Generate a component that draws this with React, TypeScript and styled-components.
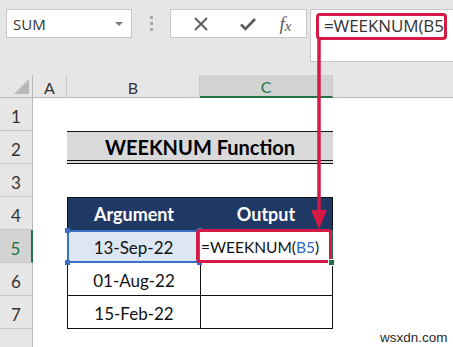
import React from 'react';
import styled, { createGlobalStyle } from 'styled-components';

const RED = '#d41a45';
const GREEN = '#217346';
const SEL_BLUE = '#3a6fc4';

const GlobalStyle = createGlobalStyle`
  html, body {
    margin: 0;
    padding: 0;
    background: #ffffff;
  }
  body {
    width: 453px;
    height: 347px;
    overflow: hidden;
    font-family: 'Lato', 'Liberation Sans', sans-serif;
  }
`;

const columns = ['A', 'B', 'C'];
const rows = [1, 2, 3, 4, 5, 6, 7, 8];
const dates = ['13-Sep-22', '01-Aug-22', '15-Feb-22'];

const App: React.FC = () => {
  return (
    <Page>
      <GlobalStyle />
      <Toolbar>
        <NameBox>
          <span>SUM</span>
          <DropArrow />
        </NameBox>
        <Grip>
          <i />
          <i />
          <i />
        </Grip>
        <IconBox>
          <IconSlot>
            <svg width="16" height="16" viewBox="0 0 16 16">
              <path d="M2 2 L14 14 M14 2 L2 14" stroke="#5a5a5a" strokeWidth="1.8" fill="none" />
            </svg>
          </IconSlot>
          <IconSlot>
            <svg width="18" height="16" viewBox="0 0 18 16">
              <path d="M2 8.5 L6.5 13 L16 3" stroke="#5a5a5a" strokeWidth="2.6" fill="none" />
            </svg>
          </IconSlot>
          <FxLabel>
            f<sub>x</sub>
          </FxLabel>
        </IconBox>
        <FormulaBox>
          <FormulaCallout>=WEEKNUM(B5)</FormulaCallout>
        </FormulaBox>
      </Toolbar>

      <Sheet>
        <Corner>
          <CornerTriangle />
        </Corner>
        {columns.map((c) => (
          <ColHeader key={c} $selected={c === 'C'}>
            {c}
          </ColHeader>
        ))}
        <ColHeader $rest />

        {rows.map((r) => (
          <React.Fragment key={r}>
            <RowHeader $selected={r === 5}>{r === 8 ? '' : r}</RowHeader>
            <Cell />
            {r === 2 && <TitleCell>WEEKNUM Function</TitleCell>}
            {r === 4 && (
              <>
                <HeadCell $side="left">Argument</HeadCell>
                <HeadCell $side="right">Output</HeadCell>
              </>
            )}
            {r === 5 && (
              <>
                <SelectedCell>
                  {dates[0]}
                  <Handle $top $left />
                  <Handle $top />
                  <Handle $left />
                  <Handle />
                </SelectedCell>
                <ActiveCell>
                  <CellCallout>
                    =WEEKNUM(<RefText>B5</RefText>)
                  </CellCallout>
                  <FillHandle />
                </ActiveCell>
              </>
            )}
            {(r === 6 || r === 7) && (
              <>
                <DataCell>{dates[r - 5]}</DataCell>
                <DataCell $last />
              </>
            )}
            {(r === 1 || r === 3 || r === 8) && (
              <>
                <Cell />
                <Cell />
              </>
            )}
            <Cell />
          </React.Fragment>
        ))}
      </Sheet>

      <Arrow width="453" height="347" viewBox="0 0 453 347">
        <line x1="319" y1="39" x2="319" y2="214" stroke={RED} strokeWidth="3.5" />
        <polygon points="311,210 327,210 319,229" fill={RED} />
      </Arrow>

      <Watermark>wsxdn.com</Watermark>
    </Page>
  );
};

export default App;

const Page = styled.div`
  position: relative;
  width: 453px;
  height: 347px;
  overflow: hidden;
  background: #ffffff;
`;

const Toolbar = styled.div`
  display: flex;
  align-items: flex-start;
  height: 75px;
  box-sizing: border-box;
  padding: 9px 0 0 6px;
  background: #e6e6e6;
`;

const NameBox = styled.div`
  display: flex;
  align-items: center;
  justify-content: space-between;
  width: 126px;
  height: 29px;
  box-sizing: border-box;
  padding: 0 8px 0 6px;
  background: #ffffff;
  border: 1px solid #c8c8c8;
  font-family: 'Open Sans', 'Liberation Sans', sans-serif;
  font-size: 15px;
  color: #333333;
`;

const DropArrow = styled.span`
  width: 0;
  height: 0;
  border-left: 4px solid transparent;
  border-right: 4px solid transparent;
  border-top: 4px solid #7a7a7a;
`;

const Grip = styled.div`
  display: flex;
  flex-direction: column;
  align-items: center;
  gap: 3px;
  width: 38px;
  padding-top: 7px;

  i {
    display: block;
    width: 3px;
    height: 3px;
    background: #a8a8a8;
  }
`;

const IconBox = styled.div`
  display: flex;
  align-items: center;
  justify-content: space-around;
  width: 137px;
  height: 29px;
  box-sizing: border-box;
  padding: 0 6px;
  background: #ffffff;
  border: 1px solid #c8c8c8;
`;

const IconSlot = styled.span`
  display: flex;
  align-items: center;
  justify-content: center;
  width: 30px;
`;

const FxLabel = styled.span`
  font-family: 'Liberation Serif', 'DejaVu Serif', serif;
  font-style: italic;
  font-size: 19px;
  color: #5e5e5e;
  line-height: 1;

  sub {
    font-size: 15px;
    vertical-align: -1px;
  }
`;

const FormulaBox = styled.div`
  flex: 1;
  height: 53px;
  margin-left: 3px;
  box-sizing: border-box;
  padding: 3px 0 0 5px;
  background: #ffffff;
  border: 1px solid #c8c8c8;
  border-right: none;
`;

const FormulaCallout = styled.div`
  width: 131px;
  height: 27px;
  box-sizing: border-box;
  padding: 0 0 0 5px;
  border: 3px solid ${RED};
  border-radius: 4px;
  overflow: hidden;
  white-space: nowrap;
  font-family: 'Open Sans', 'Liberation Sans', sans-serif;
  font-size: 17px;
  letter-spacing: -0.1px;
  line-height: 20px;
  color: #333333;
`;

const Sheet = styled.div`
  display: grid;
  grid-template-columns: 33px 34px 133px 133px 1fr;
  grid-template-rows: 23px repeat(8, 33px);
`;

const Corner = styled.div`
  position: relative;
  background: #e6e6e6;
  border-right: 1px solid #b9b9b9;
  border-bottom: 1px solid #b9b9b9;
  box-sizing: border-box;
`;

const CornerTriangle = styled.span`
  position: absolute;
  right: 3px;
  bottom: 3px;
  width: 0;
  height: 0;
  border-left: 15px solid transparent;
  border-bottom: 15px solid #b8b8b8;
`;

const ColHeader = styled.div<{ $selected?: boolean; $rest?: boolean }>`
  display: flex;
  align-items: center;
  justify-content: center;
  box-sizing: border-box;
  padding-top: 2px;
  background: ${(p) => (p.$selected ? '#d3d3d3' : '#e6e6e6')};
  border-right: ${(p) => (p.$rest ? 'none' : '1px solid #c6c6c6')};
  border-bottom: ${(p) => (p.$selected ? `2px solid ${GREEN}` : '1px solid #b9b9b9')};
  font-family: 'Lato', 'Liberation Sans', sans-serif;
  font-size: 16px;
  color: ${(p) => (p.$selected ? GREEN : '#333333')};
`;

const RowHeader = styled.div<{ $selected?: boolean }>`
  display: flex;
  align-items: flex-end;
  justify-content: center;
  box-sizing: border-box;
  padding-bottom: 3px;
  background: ${(p) => (p.$selected ? '#d3d3d3' : '#e6e6e6')};
  border-right: ${(p) => (p.$selected ? `2px solid ${GREEN}` : '1px solid #b9b9b9')};
  border-bottom: 1px solid #c6c6c6;
  font-family: 'Lato', 'Liberation Sans', sans-serif;
  font-size: 17px;
  color: ${(p) => (p.$selected ? GREEN : '#333333')};
`;

const Cell = styled.div`
  background: #ffffff;
`;

const TitleCell = styled.div`
  grid-column: 3 / span 2;
  display: flex;
  align-items: center;
  justify-content: center;
  box-sizing: border-box;
  padding-top: 2px;
  background: #d9d9d9;
  border-top: 1px solid #111111;
  border-bottom: 4px double #111111;
  font-family: 'Lato', 'Liberation Sans', sans-serif;
  font-weight: 700;
  font-size: 20px;
  color: #000000;
`;

const HeadCell = styled.div<{ $side: 'left' | 'right' }>`
  display: flex;
  align-items: center;
  justify-content: center;
  box-sizing: border-box;
  background: #203864;
  border-top: 1px solid #111111;
  border-${(p) => p.$side}: 1px solid #111111;
  font-family: 'Lato', 'Liberation Sans', sans-serif;
  font-weight: 700;
  font-size: 18px;
  color: #ffffff;
`;

const DataCell = styled.div<{ $last?: boolean }>`
  display: flex;
  align-items: center;
  justify-content: center;
  box-sizing: border-box;
  padding-top: 2px;
  background: #ffffff;
  border-left: 1px solid #111111;
  border-bottom: 1px solid #111111;
  border-right: ${(p) => (p.$last ? '1px solid #111111' : 'none')};
  font-family: 'Lato', 'Liberation Sans', sans-serif;
  font-size: 17px;
  color: #111111;
`;

const SelectedCell = styled(DataCell)`
  position: relative;
  background: #dde7f4;
  border: 2px solid ${SEL_BLUE};
`;

const Handle = styled.span<{ $top?: boolean; $left?: boolean }>`
  position: absolute;
  width: 5px;
  height: 5px;
  background: ${SEL_BLUE};
  ${(p) => (p.$top ? 'top: -4px;' : 'bottom: -4px;')}
  ${(p) => (p.$left ? 'left: -4px;' : 'right: -4px;')}
`;

const ActiveCell = styled.div`
  position: relative;
  box-sizing: border-box;
  background: #ffffff;
  border-right: 2px solid ${GREEN};
  border-bottom: 1px solid #111111;
`;

const CellCallout = styled.div`
  position: absolute;
  top: -1px;
  left: -4px;
  right: -1px;
  bottom: -1px;
  display: flex;
  align-items: center;
  box-sizing: border-box;
  padding: 2px 0 0 2px;
  border: 3px solid ${RED};
  border-radius: 4px;
  white-space: nowrap;
  font-family: 'Lato', 'Liberation Sans', sans-serif;
  font-size: 15.5px;
  color: #111111;
`;

const RefText = styled.span`
  color: #3366b8;
`;

const FillHandle = styled.span`
  position: absolute;
  right: -4px;
  bottom: -4px;
  width: 5px;
  height: 5px;
  background: ${GREEN};
  border: 1px solid #ffffff;
`;

const Arrow = styled.svg`
  position: absolute;
  left: 0;
  top: 0;
  pointer-events: none;
`;

const Watermark = styled.div`
  position: absolute;
  left: 380px;
  top: 330px;
  font-family: 'Liberation Sans', Arial, sans-serif;
  font-size: 13.5px;
  color: #2a2a2a;
`;
